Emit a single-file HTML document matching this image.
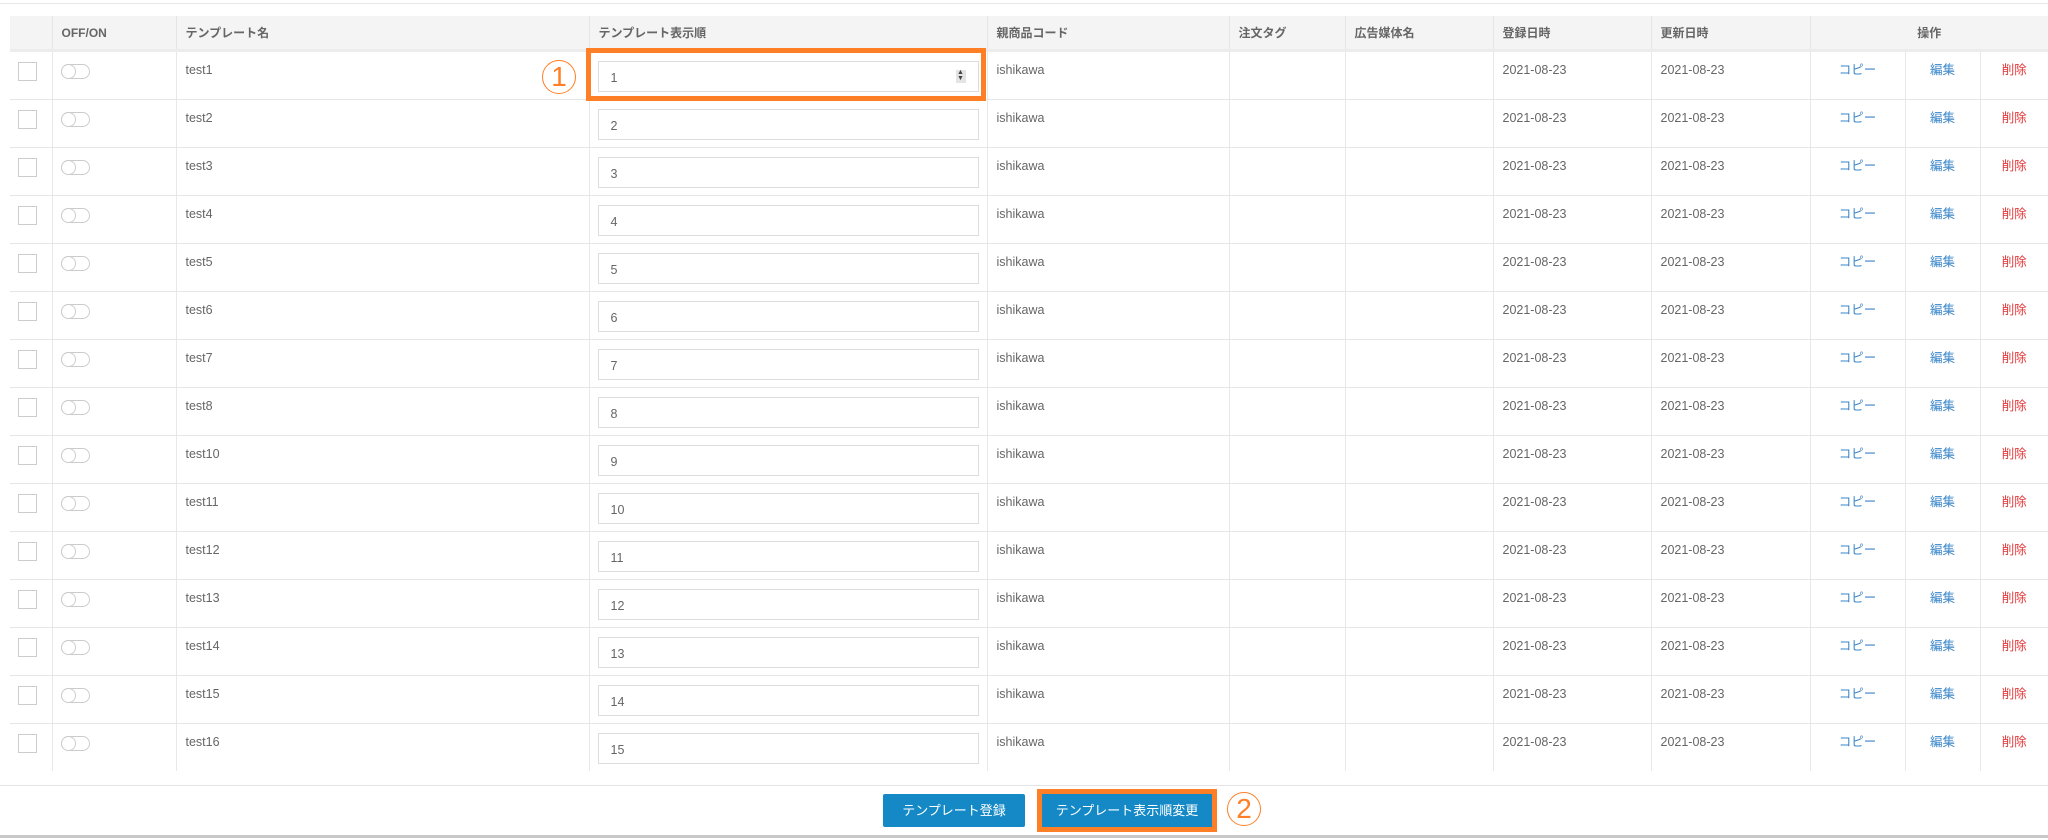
<!DOCTYPE html>
<html><head><meta charset="utf-8"><style>
body{margin:0;width:2048px;height:840px;background:#fff;font-family:"Liberation Sans","Noto Sans CJK JP",sans-serif;color:#666;font-size:12.5px;position:relative;overflow:hidden}
.topline{position:absolute;left:0;right:0;top:3px;height:1px;background:#e8e8e8}
table{position:absolute;left:10px;top:16px;border-collapse:collapse;table-layout:fixed;width:2038px}
th{background:#f4f4f4;height:33px;text-align:left;font-weight:bold;font-size:12px;color:#666;padding:0 0 0 9px;border-left:1px solid #e5e5e5;vertical-align:middle}
th:first-child{border-left:none}
tr.r td{height:47px;border-top:1px solid #e6e6e6;border-left:1px solid #e8e8e8;vertical-align:top;padding:0 0 0 9px;line-height:14px}
tr.r td:first-child{border-left:none}
tr.first td{border-top:3px solid #ececec}
.t{padding-top:11px}
.cb{width:19px;height:19px;border:1px solid #ccc;margin:10px 0 0 -1px;background:#fff;box-sizing:border-box}
.tg{width:29px;height:15px;border:1px solid #ccc;border-radius:8px;margin:12px 0 0 -1px;box-sizing:border-box;position:relative;background:#fff}
.tg:after{content:"";position:absolute;left:-1px;top:-1px;width:15px;height:15px;border-radius:50%;border:1px solid #ccc;box-sizing:border-box;background:#fff}
.in{width:381px;height:31px;border:1px solid #ddd;margin:9px 0 0 -1px;box-sizing:border-box;padding:9px 12px;font-size:12.5px;color:#666;position:relative}
.sp{position:absolute;right:12px;top:8px;width:10px;height:13px;background:#e4e4e4;font-size:7px;line-height:6px;text-align:center;color:#444}
.c{text-align:center;padding-left:0!important}
.blue{color:#3a86c8}.red{color:#e53333}
.hl1{position:absolute;left:586px;top:48px;width:400px;height:53px;border:5px solid #ff7f27;box-sizing:border-box}
.num{position:absolute;width:32px;height:32px;border:1.5px solid #ff7f27;border-radius:50%;color:#ff7f27;font-size:28px;line-height:32px;text-align:center;font-weight:normal}
.footline{position:absolute;left:0;right:0;top:785px;height:1px;background:#e4e4e4}
.botline{position:absolute;left:0;right:0;top:835px;height:3px;background:#c8c8c8}
.btn{position:absolute;background:#1589c6;color:#fff;font-size:13px;text-align:center;border-radius:2px}
.hl2{position:absolute;left:1037px;top:789px;width:180px;height:43px;border:5px solid #ff7f27;box-sizing:border-box}
</style></head><body>
<div class="topline"></div>
<table>
<colgroup><col style="width:42px"><col style="width:124px"><col style="width:413px"><col style="width:398px"><col style="width:242px"><col style="width:116px"><col style="width:148px"><col style="width:158px"><col style="width:159px"><col style="width:95px"><col style="width:75px"><col style="width:68px"></colgroup>
<tr><th></th><th>OFF/ON</th><th>テンプレート名</th><th>テンプレート表示順</th><th>親商品コード</th><th>注文タグ</th><th>広告媒体名</th><th>登録日時</th><th>更新日時</th><th colspan="3" style="text-align:center;padding:0">操作</th></tr>
<tr class="r first"><td><div class="cb"></div></td><td><div class="tg"></div></td><td><div class="t">test1</div></td><td><div class="in">1<div class="sp">▲<br>▼</div></div></td><td><div class="t">ishikawa</div></td><td></td><td></td><td><div class="t">2021-08-23</div></td><td><div class="t">2021-08-23</div></td><td class="c"><div class="t blue">コピー</div></td><td class="c"><div class="t blue">編集</div></td><td class="c"><div class="t red">削除</div></td></tr>
<tr class="r"><td><div class="cb"></div></td><td><div class="tg"></div></td><td><div class="t">test2</div></td><td><div class="in">2</div></td><td><div class="t">ishikawa</div></td><td></td><td></td><td><div class="t">2021-08-23</div></td><td><div class="t">2021-08-23</div></td><td class="c"><div class="t blue">コピー</div></td><td class="c"><div class="t blue">編集</div></td><td class="c"><div class="t red">削除</div></td></tr>
<tr class="r"><td><div class="cb"></div></td><td><div class="tg"></div></td><td><div class="t">test3</div></td><td><div class="in">3</div></td><td><div class="t">ishikawa</div></td><td></td><td></td><td><div class="t">2021-08-23</div></td><td><div class="t">2021-08-23</div></td><td class="c"><div class="t blue">コピー</div></td><td class="c"><div class="t blue">編集</div></td><td class="c"><div class="t red">削除</div></td></tr>
<tr class="r"><td><div class="cb"></div></td><td><div class="tg"></div></td><td><div class="t">test4</div></td><td><div class="in">4</div></td><td><div class="t">ishikawa</div></td><td></td><td></td><td><div class="t">2021-08-23</div></td><td><div class="t">2021-08-23</div></td><td class="c"><div class="t blue">コピー</div></td><td class="c"><div class="t blue">編集</div></td><td class="c"><div class="t red">削除</div></td></tr>
<tr class="r"><td><div class="cb"></div></td><td><div class="tg"></div></td><td><div class="t">test5</div></td><td><div class="in">5</div></td><td><div class="t">ishikawa</div></td><td></td><td></td><td><div class="t">2021-08-23</div></td><td><div class="t">2021-08-23</div></td><td class="c"><div class="t blue">コピー</div></td><td class="c"><div class="t blue">編集</div></td><td class="c"><div class="t red">削除</div></td></tr>
<tr class="r"><td><div class="cb"></div></td><td><div class="tg"></div></td><td><div class="t">test6</div></td><td><div class="in">6</div></td><td><div class="t">ishikawa</div></td><td></td><td></td><td><div class="t">2021-08-23</div></td><td><div class="t">2021-08-23</div></td><td class="c"><div class="t blue">コピー</div></td><td class="c"><div class="t blue">編集</div></td><td class="c"><div class="t red">削除</div></td></tr>
<tr class="r"><td><div class="cb"></div></td><td><div class="tg"></div></td><td><div class="t">test7</div></td><td><div class="in">7</div></td><td><div class="t">ishikawa</div></td><td></td><td></td><td><div class="t">2021-08-23</div></td><td><div class="t">2021-08-23</div></td><td class="c"><div class="t blue">コピー</div></td><td class="c"><div class="t blue">編集</div></td><td class="c"><div class="t red">削除</div></td></tr>
<tr class="r"><td><div class="cb"></div></td><td><div class="tg"></div></td><td><div class="t">test8</div></td><td><div class="in">8</div></td><td><div class="t">ishikawa</div></td><td></td><td></td><td><div class="t">2021-08-23</div></td><td><div class="t">2021-08-23</div></td><td class="c"><div class="t blue">コピー</div></td><td class="c"><div class="t blue">編集</div></td><td class="c"><div class="t red">削除</div></td></tr>
<tr class="r"><td><div class="cb"></div></td><td><div class="tg"></div></td><td><div class="t">test10</div></td><td><div class="in">9</div></td><td><div class="t">ishikawa</div></td><td></td><td></td><td><div class="t">2021-08-23</div></td><td><div class="t">2021-08-23</div></td><td class="c"><div class="t blue">コピー</div></td><td class="c"><div class="t blue">編集</div></td><td class="c"><div class="t red">削除</div></td></tr>
<tr class="r"><td><div class="cb"></div></td><td><div class="tg"></div></td><td><div class="t">test11</div></td><td><div class="in">10</div></td><td><div class="t">ishikawa</div></td><td></td><td></td><td><div class="t">2021-08-23</div></td><td><div class="t">2021-08-23</div></td><td class="c"><div class="t blue">コピー</div></td><td class="c"><div class="t blue">編集</div></td><td class="c"><div class="t red">削除</div></td></tr>
<tr class="r"><td><div class="cb"></div></td><td><div class="tg"></div></td><td><div class="t">test12</div></td><td><div class="in">11</div></td><td><div class="t">ishikawa</div></td><td></td><td></td><td><div class="t">2021-08-23</div></td><td><div class="t">2021-08-23</div></td><td class="c"><div class="t blue">コピー</div></td><td class="c"><div class="t blue">編集</div></td><td class="c"><div class="t red">削除</div></td></tr>
<tr class="r"><td><div class="cb"></div></td><td><div class="tg"></div></td><td><div class="t">test13</div></td><td><div class="in">12</div></td><td><div class="t">ishikawa</div></td><td></td><td></td><td><div class="t">2021-08-23</div></td><td><div class="t">2021-08-23</div></td><td class="c"><div class="t blue">コピー</div></td><td class="c"><div class="t blue">編集</div></td><td class="c"><div class="t red">削除</div></td></tr>
<tr class="r"><td><div class="cb"></div></td><td><div class="tg"></div></td><td><div class="t">test14</div></td><td><div class="in">13</div></td><td><div class="t">ishikawa</div></td><td></td><td></td><td><div class="t">2021-08-23</div></td><td><div class="t">2021-08-23</div></td><td class="c"><div class="t blue">コピー</div></td><td class="c"><div class="t blue">編集</div></td><td class="c"><div class="t red">削除</div></td></tr>
<tr class="r"><td><div class="cb"></div></td><td><div class="tg"></div></td><td><div class="t">test15</div></td><td><div class="in">14</div></td><td><div class="t">ishikawa</div></td><td></td><td></td><td><div class="t">2021-08-23</div></td><td><div class="t">2021-08-23</div></td><td class="c"><div class="t blue">コピー</div></td><td class="c"><div class="t blue">編集</div></td><td class="c"><div class="t red">削除</div></td></tr>
<tr class="r"><td><div class="cb"></div></td><td><div class="tg"></div></td><td><div class="t">test16</div></td><td><div class="in">15</div></td><td><div class="t">ishikawa</div></td><td></td><td></td><td><div class="t">2021-08-23</div></td><td><div class="t">2021-08-23</div></td><td class="c"><div class="t blue">コピー</div></td><td class="c"><div class="t blue">編集</div></td><td class="c"><div class="t red">削除</div></td></tr>
</table>
<div class="hl1"></div>
<div class="num" style="left:542px;top:60px">1</div>
<div class="footline"></div>
<div class="btn" style="left:883px;top:794px;width:142px;height:33px;line-height:33px">テンプレート登録</div>
<div class="hl2"></div>
<div class="btn" style="left:1042px;top:794px;width:170px;height:33px;line-height:33px;border-radius:0">テンプレート表示順変更</div>
<div class="num" style="left:1227px;top:792px">2</div>
<div class="botline"></div>
</body></html>
